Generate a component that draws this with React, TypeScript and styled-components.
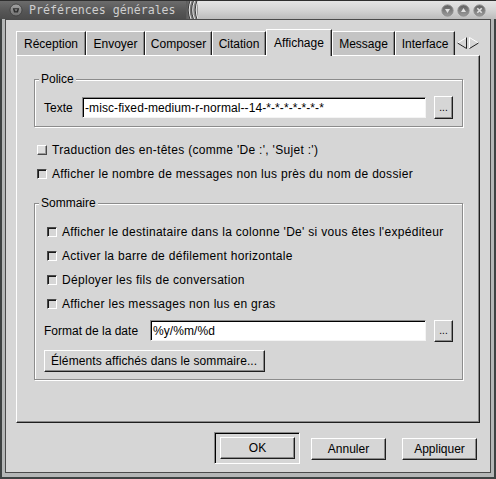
import React from "react";
import styled, { createGlobalStyle } from "styled-components";

const GlobalStyle = createGlobalStyle`
  html, body {
    margin: 0;
    padding: 0;
    background: #3e4242;
  }
  body {
    font-family: "Liberation Sans", Arial, sans-serif;
    font-size: 12px;
    color: #000;
  }
`;

const Window = styled.div`
  width: 496px;
  height: 479px;
  display: flex;
  flex-direction: column;
  box-sizing: border-box;
  overflow: hidden;
`;

const TitleBar = styled.div`
  height: 19px;
  display: flex;
  align-items: stretch;
  flex-shrink: 0;
  border-top: 1px solid #2e2e2e;
  box-sizing: border-box;
`;

const TitleDark = styled.div`
  width: 186px;
  display: flex;
  align-items: center;
  gap: 6px;
  padding-left: 9px;
  box-sizing: border-box;
  background: linear-gradient(#6c6c6c, #555 60%, #4c4c4c);
`;

const TitleText = styled.span`
  font-family: "DejaVu Sans Mono", "Liberation Mono", monospace;
  font-size: 11.6px;
  color: #cfcfcf;
  white-space: nowrap;
`;

const Grip = styled.div`
  width: 12px;
  background: linear-gradient(90deg, #5a5a5a, #9a9a9a);
  display: flex;
`;

const TitleLight = styled.div`
  flex: 1;
  display: flex;
  align-items: center;
  justify-content: flex-end;
  gap: 3px;
  padding-right: 10px;
  background: linear-gradient(#e4e4e4, #d4d4d4 50%, #bcbcbc);
`;

const Frame = styled.div`
  flex: 1;
  display: flex;
  min-height: 0;
  background: #b4b6b6;
  border: 2px solid #3e4242;
  border-top: none;
  padding: 0 3px 4px 3px;
`;

const Client = styled.div`
  flex: 1;
  min-width: 0;
  display: flex;
  flex-direction: column;
  background: #d6d6d6;
  border: 1px solid #4a4a4a;
  padding: 9px 10px 0 10px;
`;

const Notebook = styled.div`
  flex: 1;
  display: flex;
  flex-direction: column;
  min-width: 0;
`;

const TabRow = styled.div`
  height: 26px;
  display: flex;
  align-items: flex-end;
  flex-shrink: 0;
`;

const Tab = styled.div<{ $active?: boolean; $w: number }>`
  position: relative;
  z-index: ${(p) => (p.$active ? 1 : 0)};
  width: ${(p) => p.$w}px;
  height: ${(p) => (p.$active ? 27 : 24)}px;
  margin-bottom: ${(p) => (p.$active ? -1 : 0)}px;
  display: flex;
  align-items: center;
  justify-content: center;
  flex-shrink: 0;
  box-sizing: border-box;
  background: ${(p) => (p.$active ? "#d6d6d6" : "#c4c4c4")};
  border-top: 1px solid #fff;
  border-left: 1px solid #fff;
  border-right: 1px solid #1e1e1e;
  box-shadow: inset -1px 0 0 #8a8a8a;
  white-space: nowrap;
`;

const TabArrows = styled.div`
  width: 25px;
  height: 24px;
  display: flex;
  align-items: center;
  justify-content: center;
`;

const Panel = styled.div`
  flex: 1;
  display: flex;
  flex-direction: column;
  background: #d6d6d6;
  border-top: 1px solid #fff;
  border-left: 1px solid #fff;
  border-right: 1px solid #1e1e1e;
  border-bottom: 1px solid #1e1e1e;
  box-shadow: inset -1px -1px 0 #8a8a8a;
  padding: 16px 16px 0 17px;
`;

const Group = styled.fieldset<{ $top?: number }>`
  margin: ${(p) => p.$top ?? 0}px 0 0 0;
  padding: 10px 9px 7px 9px;
  border: 1px solid #8c8c8c;
  box-shadow: inset 1px 1px 0 #fff, 1px 1px 0 #fff;
  display: flex;
  flex-direction: column;
  min-inline-size: 0;
`;

const Legend = styled.legend`
  margin-left: -5px;
  padding: 0 2px;
  line-height: 14px;
  background: #d6d6d6;
`;

const FieldRow = styled.div<{ $top?: number }>`
  height: 23px;
  margin-top: ${(p) => p.$top ?? 0}px;
  display: flex;
  align-items: center;
`;

const Label = styled.span<{ $w: number }>`
  width: ${(p) => p.$w}px;
  flex-shrink: 0;
  white-space: nowrap;
`;

const Entry = styled.div`
  flex: 1;
  min-width: 0;
  height: 21px;
  box-sizing: border-box;
  background: #fff;
  border: 1px solid;
  border-color: #8a8a8a #f4f4f4 #f4f4f4 #8a8a8a;
  box-shadow: inset 1px 1px 0 #000;
  padding: 0 2px;
  display: flex;
  align-items: center;
  letter-spacing: 0.08px;
  white-space: nowrap;
  overflow: hidden;
`;

const Button = styled.div<{ $w?: number; $h?: number }>`
  ${(p) => (p.$w ? `width: ${p.$w}px;` : "padding: 0 6px;")}
  height: ${(p) => p.$h ?? 22}px;
  box-sizing: border-box;
  display: flex;
  align-items: center;
  justify-content: center;
  flex-shrink: 0;
  background: #d6d6d6;
  border: 1px solid;
  border-color: #fff #1e1e1e #1e1e1e #fff;
  box-shadow: inset -1px -1px 0 #8a8a8a;
  white-space: nowrap;
`;

const WideButton = styled(Button)`
  letter-spacing: 0.1px;
  padding: 0 7px 0 6px;
`;

const DotsButton = styled(Button)`
  margin-left: 8px;
  align-items: flex-end;
  padding-bottom: 5px;
  font-size: 10px;
  line-height: 10px;
`;

const CheckRow = styled.div<{ $top?: number }>`
  height: 24px;
  margin-top: ${(p) => p.$top ?? 0}px;
  display: flex;
  align-items: center;
  gap: 5px;
  letter-spacing: 0.3px;
  white-space: nowrap;
`;

const Check = styled.span<{ $raised?: boolean }>`
  width: 10px;
  height: 10px;
  margin-left: 3px;
  box-sizing: border-box;
  border: 1px solid;
  border-color: ${(p) =>
    p.$raised ? "#fff #4a4a4a #4a4a4a #fff" : "#4a4a4a #fff #fff #4a4a4a"};
  background: ${(p) => (p.$raised ? "#dedede" : "#d6d6d6")};
  box-shadow: ${(p) =>
    p.$raised ? "inset -1px -1px 0 #9a9a9a" : "inset 1px 1px 0 #1a1a1a"};
  flex-shrink: 0;
`;

const ButtonRow = styled.div`
  height: 49px;
  flex-shrink: 0;
  display: flex;
  align-items: flex-start;
  justify-content: flex-end;
  gap: 16px;
  padding: 9px 3px 0 0;
  box-sizing: border-box;
`;

const DefaultFrame = styled.div`
  height: 32px;
  box-sizing: border-box;
  padding: 4px 4px 3px 5px;
  margin-right: -5px;
  border: 1px solid;
  border-color: #8a8a8a #fff #fff #8a8a8a;
  box-shadow: inset 1px 1px 0 #000;
`;

const DialogButton = styled(Button)`
  margin-top: 6px;
`;

const CtlButton = ({ kind }: { kind: "min" | "max" | "close" }) => (
  <svg width="13" height="13" viewBox="0 0 13 13">
    <defs>
      <linearGradient id={`g-${kind}`} x1="0" y1="0" x2="0" y2="1">
        <stop offset="0" stopColor="#5e5e5e" />
        <stop offset="1" stopColor="#9c9c9c" />
      </linearGradient>
    </defs>
    <circle cx="6.5" cy="6.5" r="5.6" fill={`url(#g-${kind})`} stroke="#8a8a8a" strokeWidth="1" />
    {kind === "min" && <path d="M4 5 H9 L6.5 9 Z" fill="#e2e2e2" />}
    {kind === "max" && <path d="M4 8 H9 L6.5 4 Z" fill="#e2e2e2" />}
    {kind === "close" && (
      <path d="M4.3 4.3 L8.7 8.7 M8.7 4.3 L4.3 8.7" stroke="#e2e2e2" strokeWidth="1.6" />
    )}
  </svg>
);

const MenuIcon = () => (
  <svg width="14" height="14" viewBox="0 0 14 14">
    <defs>
      <linearGradient id="mi" x1="0" y1="0" x2="0" y2="1">
        <stop offset="0" stopColor="#a4a4a4" />
        <stop offset="1" stopColor="#707070" />
      </linearGradient>
    </defs>
    <circle cx="7" cy="7" r="6" fill="url(#mi)" stroke="#3a3a3a" strokeWidth="0.8" />
    <path d="M3.8 5.2 H10.2 L9 9.6 H5 Z" fill="#2e2e2e" />
    <path d="M5.4 6.2 H8.6 L7 8.4 Z" fill="#8a8a8a" />
  </svg>
);

const GripLines = () => (
  <svg width="12" height="18" viewBox="0 0 12 18">
    {[2.5, 6, 9.5].map((x) => (
      <g key={x}>
        <path d={`M${x + 1.5} 0 Q${x - 2} 9 ${x + 1.5} 18`} stroke="#3e3e3e" strokeWidth="1" fill="none" />
        <path d={`M${x + 2.5} 0 Q${x - 1} 9 ${x + 2.5} 18`} stroke="#e8e8e8" strokeWidth="1" fill="none" />
      </g>
    ))}
  </svg>
);

const ScrollArrows = () => (
  <svg width="22" height="12" viewBox="0 0 22 12">
    <path d="M9.5 0.5 L0.5 6 L9.5 11.5" fill="none" stroke="#fff" strokeWidth="1" />
    <path d="M9.5 0.5 V11.5 M0.5 6 L9.5 11.5" fill="none" stroke="#1e1e1e" strokeWidth="1" />
    <path d="M12.5 11.5 V0.5 L21.5 6" fill="none" stroke="#fff" strokeWidth="1" />
    <path d="M21.5 6 L12.5 11.5" fill="none" stroke="#1e1e1e" strokeWidth="1" />
  </svg>
);

const tabs: [string, number][] = [
  ["Réception", 70],
  ["Envoyer", 59],
  ["Composer", 67],
  ["Citation", 54],
  ["Affichage", 66],
  ["Message", 63],
  ["Interface", 60],
];

const summaryOptions = [
  "Afficher le destinataire dans la colonne 'De' si vous êtes l'expéditeur",
  "Activer la barre de défilement horizontale",
  "Déployer les fils de conversation",
  "Afficher les messages non lus en gras",
];

export default function App() {
  return (
    <>
      <GlobalStyle />
      <Window>
        <TitleBar>
          <TitleDark>
            <MenuIcon />
            <TitleText>Préférences générales</TitleText>
          </TitleDark>
          <Grip>
            <GripLines />
          </Grip>
          <TitleLight>
            <CtlButton kind="min" />
            <CtlButton kind="max" />
            <CtlButton kind="close" />
          </TitleLight>
        </TitleBar>
        <Frame>
          <Client>
            <Notebook>
              <TabRow>
                {tabs.map(([t, w]) => (
                  <Tab key={t} $w={w} $active={t === "Affichage"}>
                    {t}
                  </Tab>
                ))}
                <TabArrows>
                  <ScrollArrows />
                </TabArrows>
              </TabRow>
              <Panel>
                <Group>
                  <Legend>Police</Legend>
                  <FieldRow>
                    <Label $w={38}>Texte</Label>
                    <Entry>-misc-fixed-medium-r-normal--14-*-*-*-*-*-*-*</Entry>
                    <DotsButton $w={19} $h={23}>...</DotsButton>
                  </FieldRow>
                </Group>
                <CheckRow $top={11}>
                  <Check $raised />
                  Traduction des en-têtes (comme 'De :', 'Sujet :')
                </CheckRow>
                <CheckRow>
                  <Check />
                  Afficher le nombre de messages non lus près du nom de dossier
                </CheckRow>
                <Group $top={10}>
                  <Legend>Sommaire</Legend>
                  {summaryOptions.map((o) => (
                    <CheckRow key={o}>
                      <Check />
                      {o}
                    </CheckRow>
                  ))}
                  <FieldRow $top={3}>
                    <Label $w={106}>Format de la date</Label>
                    <Entry>%y/%m/%d</Entry>
                    <DotsButton $w={19}>...</DotsButton>
                  </FieldRow>
                  <FieldRow $top={7}>
                    <WideButton>Éléments affichés dans le sommaire...</WideButton>
                  </FieldRow>
                </Group>
              </Panel>
            </Notebook>
            <ButtonRow>
              <DefaultFrame>
                <Button $w={75}>OK</Button>
              </DefaultFrame>
              <DialogButton $w={75}>Annuler</DialogButton>
              <DialogButton $w={75}>Appliquer</DialogButton>
            </ButtonRow>
          </Client>
        </Frame>
      </Window>
    </>
  );
}
